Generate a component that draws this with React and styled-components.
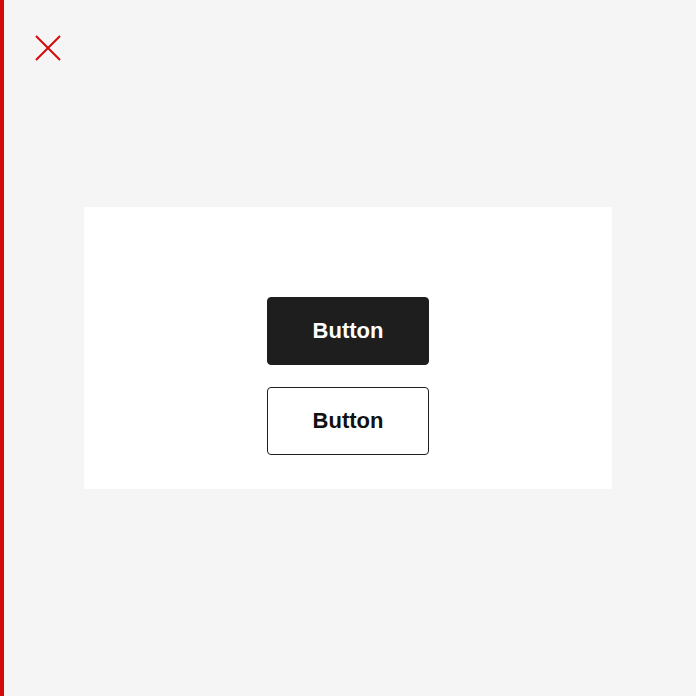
import React from 'react';
import styled, { createGlobalStyle } from 'styled-components';

const GlobalStyle = createGlobalStyle`
  html, body { margin: 0; padding: 0; }
  body {
    background: #f5f5f5;
    font-family: "Liberation Sans", Arial, sans-serif;
  }
`;

const Page = styled.div`
  position: relative;
  box-sizing: border-box;
  height: 696px;
  border-left: 4px solid #d20a0a;
  display: flex;
  align-items: center;
  justify-content: center;
  padding-right: 4px;
`;

const Close = styled.button`
  position: absolute;
  top: 34px;
  left: 30px;
  width: 28px;
  height: 28px;
  padding: 0;
  border: none;
  background: none;
  cursor: pointer;
  display: flex;
  align-items: center;
  justify-content: center;
`;

const Card = styled.div`
  box-sizing: border-box;
  width: 528px;
  height: 282px;
  background: #fff;
  display: flex;
  flex-direction: column;
  align-items: center;
  justify-content: flex-end;
  gap: 22px;
  padding-bottom: 34px;
`;

const Button = styled.button`
  box-sizing: border-box;
  width: 162px;
  height: 68px;
  border-radius: 4px;
  border: 1.5px solid #1e1e1e;
  background: ${(p) => (p.$primary ? '#1e1e1e' : '#fff')};
  color: ${(p) => (p.$primary ? '#fff' : '#111')};
  font-family: "Liberation Sans", Arial, sans-serif;
  font-weight: 700;
  font-size: 22px;
  padding: 0 0 1px;
  cursor: pointer;
`;

export default function App() {
  return (
    <>
      <GlobalStyle />
      <Page>
        <Close aria-label="Close">
          <svg width="28" height="28" viewBox="0 0 28 28">
            <path d="M2 2 L26 26 M26 2 L2 26" stroke="#d20a0a" strokeWidth="2" fill="none" />
          </svg>
        </Close>
        <Card>
          <Button $primary>Button</Button>
          <Button>Button</Button>
        </Card>
      </Page>
    </>
  );
}
